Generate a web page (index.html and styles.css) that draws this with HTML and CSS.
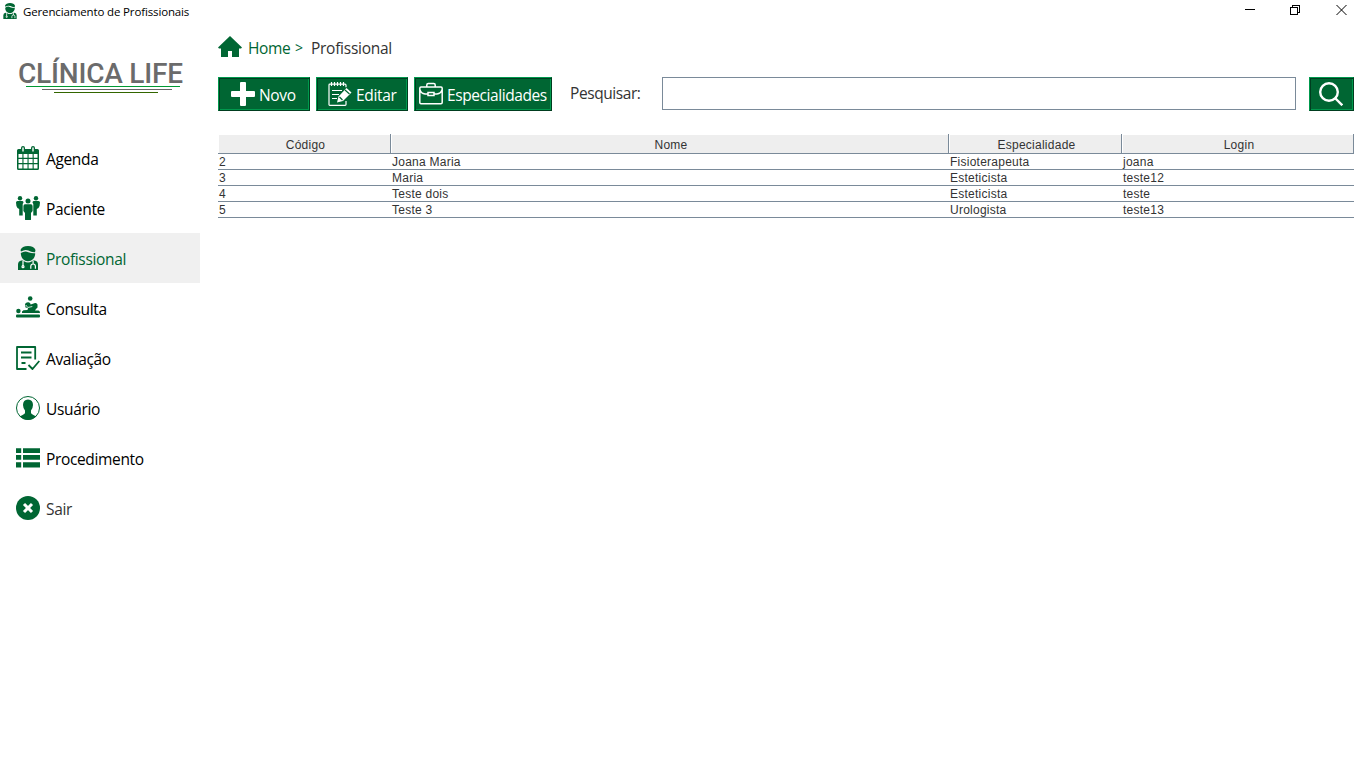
FILE: index.html
```html
<!DOCTYPE html>
<html lang="pt-BR">
<head>
<meta charset="utf-8">
<title>Gerenciamento de Profissionais</title>
<link rel="stylesheet" href="styles.css">
</head>
<body>
<svg class="defs" width="0" height="0">
  <symbol id="doctor" viewBox="0 0 24 24">
    <path fill="currentColor" d="M4.500 4Q6 0 12 0t7.500 4L19 6.200Q15.500 6.500 12.500 4.600 9 3 5 5.500ZM4.800 7Q9 4.300 12.300 6.200q3 1.300 6.900 1.100C19.200 12 16 15.200 12 15.200S4.800 12 4.800 7ZM2 24v-5.500Q2 15 5.500 14.500q1.500-.2 2.500.7 4 2.600 8 0 1-.9 2.500-.7Q22 15 22 18.500V24Z"/>
    <path class="cut" d="M7 15v5M14.800 22.800v-2.500a2.300 2.300 0 0 1 4.600 0v2.500M17.100 18v-3"/>
    <circle class="cut" cx="7" cy="20.700" r="1"/>
  </symbol>
</svg>
<header class="titlebar">
  <svg class="app-icon" viewBox="0 0 24 24"><use href="#doctor"/></svg>
  <span class="window-title">Gerenciamento de Profissionais</span>
  <svg class="window-controls" viewBox="0 0 104 12" shape-rendering="crispEdges">
    <path d="M0 5.500h10M45.500 3.500h7v7h-7zM47.500 3V1.500h7v7H53"/>
    <path d="M91.500 1l10 10M101.500 1l-10 10" shape-rendering="auto"/>
  </svg>
</header>
<div class="layout">
  <aside class="sidebar">
    <div class="logo">
      <span class="logo-name">CLÍNICA LIFE</span>
      <i class="rule rule-green"></i><i class="rule rule-gray"></i><i class="rule rule-olive"></i>
    </div>
    <nav>
      <a class="item"><svg viewBox="0 0 24 24"><path fill="currentColor" fill-rule="evenodd" d="M2.500 3H5V2a2 2 0 0 1 4 0v1h6V2a2 2 0 0 1 4 0v1h2.500Q23 3 23 4.500v18q0 1.500-1.500 1.500h-19Q1 24 1 22.500v-18Q1 3 2.500 3ZM2.500 8v3.800h3.900V8Zm5 0v3.800h4V8Zm5.100 0v3.800h4V8Zm5.100 0v3.800h3.800V8ZM2.500 12.900v4.200h3.900v-4.200Zm5 0v4.200h4v-4.200Zm5.100 0v4.200h4v-4.200Zm5.100 0v4.200h3.800v-4.200ZM2.500 18.200v4.300h3.900v-4.300Zm5 0v4.300h4v-4.300Zm5.100 0v4.300h4v-4.300Zm5.100 0v4.300h3.800v-4.300ZM6.300 2v3.500h1.400V2a.7.7 0 0 0-1.400 0Zm10 0v3.500h1.400V2a.7.7 0 0 0-1.400 0Z"/></svg><span>Agenda</span></a>
      <a class="item"><svg viewBox="0 0 24 24"><g fill="currentColor"><circle cx="4" cy="2.300" r="2.200"/><circle cx="20" cy="2.300" r="2.200"/><circle cx="12" cy="5" r="2.500"/><path d="M1.500 5h4.800q1.200 0 1.200 1.500L6.700 8v11.500H3.200V13L1.500 12Q0 10 0 6.500 0 5 1.500 5ZM22.500 5h-4.800q-1.200 0-1.200 1.500l.8 1.500v11.500h3.500V13l1.700-1Q24 10 24 6.500 24 5 22.500 5ZM9 8.300h6q1.600.2 1.600 2V15L15 17v6.500q0 .5-.8.500H9.800Q9 24 9 23.500V17l-1.600-2v-4.700q0-1.800 1.600-2Z"/></g></svg><span>Paciente</span></a>
      <a class="item active"><svg viewBox="0 0 24 24"><use href="#doctor"/></svg><span>Profissional</span></a>
      <a class="item"><svg viewBox="0 0 24 24"><g fill="currentColor"><circle cx="14.200" cy="2.500" r="2.300"/><circle cx="2.400" cy="15" r="2.200"/><path d="M9 8q1.200-2 3.500-1.700 2 .2 2.200 2.200L19 7q2-.3 2.500 1.500v3l-1.500 1.500-1 1.500h3.500q1.500.3 1.500 2.500H6v-1.500l1.500-1.200 4-.3.500-2-2.500-.5Z"/><rect y="18.500" width="24" height="3" rx="1"/></g><path d="m9.800 9 2 2.500 4.500-1" fill="none" stroke="#fff" stroke-width=".8"/></svg><span>Consulta</span></a>
      <a class="item"><svg viewBox="0 0 24 24" fill="none" stroke="currentColor" stroke-width="1.800" stroke-linejoin="round"><path d="M19.200 13.500V1H1v22h9.500M5 6.500h10.500M5 11.500h10.500M5.500 17h4M12.500 19l4 4L23.300 15"/></svg><span>Avaliação</span></a>
      <a class="item"><svg viewBox="0 0 24 24"><circle cx="12" cy="12" r="11.500" fill="none" stroke="currentColor"/><path fill="currentColor" d="M12 3.500q5 .3 5 5.500-.2 3.800-2 5.500v2.500q.5 1.500 5.500 3.300Q17 24 12 24t-8.500-3.700Q8.500 18.500 9 17v-2.500Q7.200 12.800 7 9q0-5.200 5-5.500Z"/></svg><span>Usuário</span></a>
      <a class="item"><svg viewBox="0 0 24 24" fill="currentColor"><path d="M0 2.300h5.200V7H0Zm7 0h17V7H7ZM0 9h5.200v4.700H0Zm7 0h17v4.700H7ZM0 16.200h5.200v5.200H0Zm7 0h17v5.200H7Z"/></svg><span>Procedimento</span></a>
      <a class="item leave"><svg viewBox="0 0 24 24"><circle cx="12" cy="12" r="12" fill="currentColor"/><path d="m8 8 8 8m0-8-8 8" stroke="#fff" stroke-width="3"/></svg><span>Sair</span></a>
    </nav>
  </aside>
  <main>
    <div class="crumbs">
      <svg viewBox="0 0 24 22"><path fill="currentColor" d="M12 0 24 11.500 23 12.500h-2V21h-7v-6h-4v6H3v-8.500H1L0 11.500Z"/></svg>
      <span class="home">Home</span><span class="sep">&gt;</span><span class="here">Profissional</span>
    </div>
    <div class="toolbar">
      <button class="btn novo"><svg viewBox="0 0 24 24"><path fill="#fff" d="M9 1q0-1 1-1h4q1 0 1 1v8h8q1 0 1 1v4q0 1-1 1h-8v8q0 1-1 1h-4q-1 0-1-1v-8H1q-1 0-1-1v-4q0-1 1-1h8Z"/></svg><span>Novo</span></button>
      <button class="btn editar"><svg viewBox="0 0 24 24" fill="none" stroke="#fff" stroke-width="1.200"><path d="M18 19v3.500q0 .8-.8.800H1.800q-.8 0-.8-.8V3q0-.8.800-.8H17q1 0 1 1v2M3.500 0v4M6.500 0v4M9.500 0v4M12.500 0v4M15.500 0v4M4 8.500h10M4 12.500h7M4 16.500h5"/><path d="m9 20.500 1.500-6 8-8.500 5 4.500-8.500 8.500Z" fill="#fff" stroke="none"/><path d="m11.500 15 3 3M17 8l4.500 4" stroke="#063"/></svg><span>Editar</span></button>
      <button class="btn espec"><svg viewBox="0 0 24 24" fill="none" stroke="#fff" stroke-width="1.500"><path d="M7.800 5V3q0-1.500 1.500-1.500h5.400q1.500 0 1.500 1.500v2M2 5h20q1.200 0 1.200 1.200V20.500q0 1.200-1.200 1.200H2q-1.200 0-1.200-1.200V6.200Q.8 5 2 5ZM1 8q1 3.500 5 4h2.800M23 8q-1 3.500-5 4h-2.800M9 10.500h6v3H9Z"/></svg><span>Especialidades</span></button>
      <label for="q">Pesquisar:</label>
      <input id="q" class="search" type="text">
      <button class="btn find" aria-label="Pesquisar"><svg viewBox="0 0 24 24" fill="none" stroke="#fff" stroke-width="2.400"><circle cx="10" cy="10" r="8.800"/><path d="m16.500 16.500 6.800 6.800"/></svg></button>
    </div>
    <table>
      <colgroup><col class="c1"><col class="c2"><col class="c3"><col class="c4"></colgroup>
      <thead><tr><th>Código</th><th>Nome</th><th>Especialidade</th><th>Login</th></tr></thead>
      <tbody>
        <tr><td>2</td><td>Joana Maria</td><td>Fisioterapeuta</td><td>joana</td></tr>
        <tr><td>3</td><td>Maria</td><td>Esteticista</td><td>teste12</td></tr>
        <tr><td>4</td><td>Teste dois</td><td>Esteticista</td><td>teste</td></tr>
        <tr><td>5</td><td>Teste 3</td><td>Urologista</td><td>teste13</td></tr>
      </tbody>
    </table>
  </main>
</div>
</body>
</html>
```
FILE: styles.css
```css
* { box-sizing: border-box; }
body { margin: 0; height: 768px; overflow: hidden; background: #fff; color: #000; font: 15.5px/22px "Open Sans", "Noto Sans", sans-serif; letter-spacing: -0.35px; }
.defs { display: block; height: 0; }
.cut { fill: none; stroke: #fff; stroke-width: 1.200; }
.titlebar { height: 23px; display: flex; align-items: flex-start; padding: 3px 17px 0 2px; }
.app-icon { width: 16px; height: 16px; color: #063; }
.window-title { font-size: 11.5px; line-height: 17px; margin-left: 5px; letter-spacing: -0.14px; }
.window-controls { width: 104px; height: 12px; margin: 1px 0 0 auto; fill: none; stroke: #000; }
.layout { display: flex; }
.sidebar { width: 200px; flex: none; }
.logo { height: 110px; padding-top: 34px; }
.logo-name { display: block; height: 29px; margin-left: 18px; font: 500 28px/34px Roboto, sans-serif; color: #6b6b6b; letter-spacing: -0.2px; white-space: nowrap; }
.rule { display: block; height: 1px; margin-bottom: 2px; }
.rule-green { margin-left: 26px; width: 154px; background: #009933; }
.rule-gray { margin-left: 42px; width: 130px; background: #666; }
.rule-olive { margin-left: 54px; width: 104px; background: #336600; }
.item { height: 50px; display: flex; align-items: center; padding-left: 16px; }
.item svg { width: 24px; height: 24px; margin-right: 6px; color: #063; flex: none; }
.item span { padding-top: 1px; }
.active { background: #f0f0f0; color: #063; }
.leave { color: #333; }
main { flex: 1; padding: 13px 12px 0 18px; }
.crumbs { display: flex; height: 22px; align-items: center; color: #063; margin-bottom: 19px; }
.crumbs svg { width: 24px; height: 22px; margin-right: 6px; }
.crumbs span { padding-top: 1px; }
.home { width: 47px; }
.sep { width: 16px; font-size: 14px; }
.here { color: #333; letter-spacing: -0.27px; }
.toolbar { display: flex; height: 34px; }
.btn { height: 34px; padding: 0; display: flex; align-items: center; background: #063; color: #fff; font: inherit; letter-spacing: inherit; border: 1px solid; border-color: #00994d #003d1f #003d1f #00994d; box-shadow: inset 1px 1px #003d1f, inset -1px -1px #00994d; margin-right: 6px; }
.btn svg { width: 24px; height: 24px; flex: none; margin-right: 4px; }
.btn span { padding-top: 1px; }
.novo { width: 92px; padding-left: 12px; }
.editar { width: 92px; padding-left: 11px; }
.espec { width: 138px; padding-left: 4px; letter-spacing: -0.42px; }
.toolbar label { width: 92px; margin-left: 12px; line-height: 33px; color: #333; letter-spacing: -0.42px; }
.search { width: 634px; height: 33px; border: 1px solid #7a8a99; margin: 0 13px 0 0; padding: 0 4px; font: inherit; outline: 0; }
.find { width: 45px; padding-left: 9px; margin: 0; }
.find svg { margin: 0; }
table { width: 1136px; margin-top: 23px; table-layout: fixed; border-collapse: separate; border-spacing: 0; color: #333; font: 12px/14px "Liberation Sans", Arial, sans-serif; letter-spacing: 0.25px; }
.c1 { width: 173px; } .c2 { width: 558px; } .c3 { width: 173px; } .c4 { width: 232px; }
th { height: 20px; padding: 2px 0 0 3px; font-weight: 400; background: #eee; border-right: 1px solid #7a8a99; border-bottom: 1px solid #7a8a99; box-shadow: inset 1px 1px #fff; }
td { height: 16px; padding: 1px 0 0 1px; border-bottom: 1px solid #7a8a99; }
```
